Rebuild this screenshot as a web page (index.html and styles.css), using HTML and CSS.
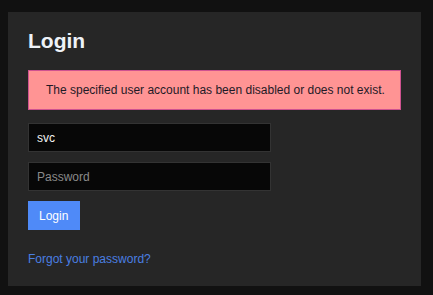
FILE: index.html
```html
<!DOCTYPE html>
<html lang="en">
<head>
    <meta charset="UTF-8">
    <meta name="viewport" content="width=device-width, initial-scale=1.0">
    <title>Login</title>
    <link rel="stylesheet" href="styles.css">
</head>
<body>
    <div class="card">
        <h1 class="title">Login</h1>

        <div class="alert">The specified user account has been disabled or does not exist.</div>

        <form class="login-form">
            <input type="text" class="field" value="svc">
            <input type="password" class="field" placeholder="Password">
            <button type="submit" class="btn">Login</button>
        </form>

        <a href="#" class="forgot">Forgot your password?</a>
    </div>
</body>
</html>
```

FILE: styles.css
```css
* {
    margin: 0;
    padding: 0;
    box-sizing: border-box;
}

body {
    font-family: 'Liberation Sans', Arial, sans-serif;
    font-size: 12px;
    background: #111111;
    padding: 12px 12px 9px 8px;
    min-height: 100vh;
}

.card {
    background: #262626;
    padding: 17px 20px 20px;
    min-height: 274px;
}

.title {
    font-size: 21px;
    line-height: 24px;
    font-weight: bold;
    color: #eef2f8;
    margin-bottom: 17px;
}

.alert {
    background: #ff9494;
    border: 1px solid #cf5290;
    color: #1e1a26;
    font-size: 12px;
    line-height: 16px;
    padding: 11px 12px 11px 17px;
    margin-bottom: 13px;
    white-space: nowrap;
}

.login-form {
    display: flex;
    flex-direction: column;
    align-items: flex-start;
    gap: 10px;
}

.field {
    width: 243px;
    height: 29px;
    padding: 0 8px;
    background: #070707;
    border: 1px solid #333333;
    color: #f2f2f2;
    font-family: inherit;
    font-size: 12px;
    outline: none;
}

.field::placeholder {
    color: #8a8a8a;
}

.btn {
    height: 29px;
    padding: 0 12px 0 11px;
    background: #4f8af8;
    color: #ffffff;
    border: none;
    font-family: inherit;
    font-size: 12px;
    cursor: pointer;
}

.forgot {
    display: inline-block;
    margin-top: 22px;
    color: #4a7fe2;
    text-decoration: none;
    line-height: 14px;
}
```
